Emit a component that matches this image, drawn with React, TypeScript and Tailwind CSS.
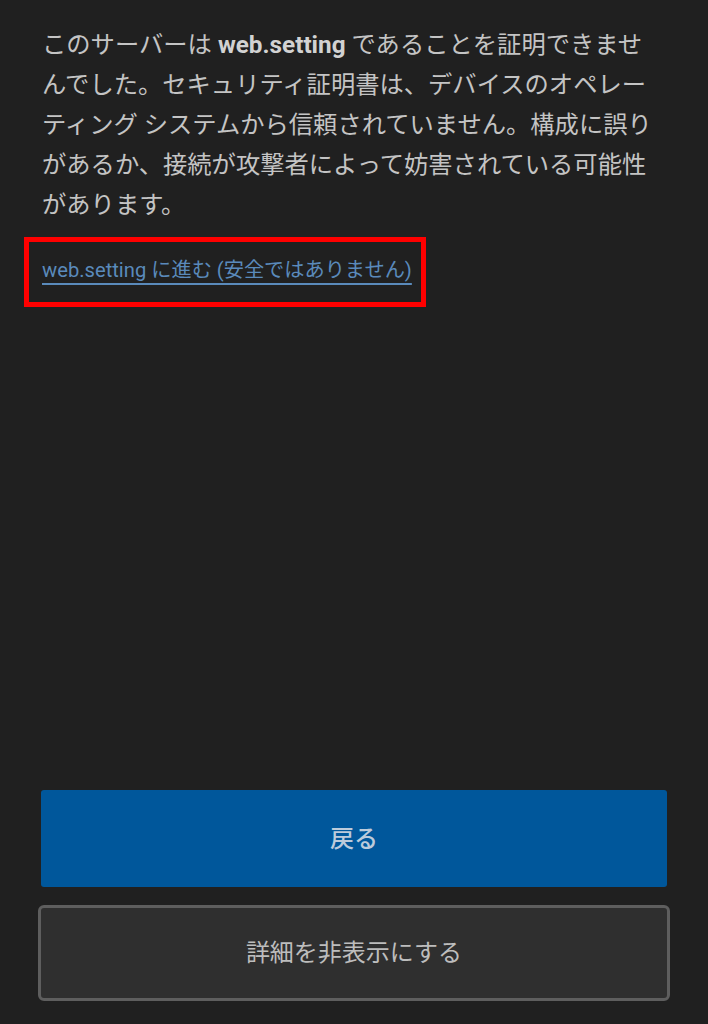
export default function App() {
  const font = "font-['Roboto','Noto_Sans_CJK_JP',sans-serif]";
  return (
    <div className={`${font} flex h-[1024px] w-full flex-col bg-[#202020]`}>
      {/* warning body */}
      <p className="whitespace-nowrap px-[42px] pt-[25px] text-[24.3px] leading-[40px] text-[#c4c4c4]">
        このサーバーは <b className="font-bold text-[#d2d2d2]">web.setting</b> であることを証明できませ
        <br />
        んでした。セキュリティ証明書は、デバイスのオペレー
        <br />
        ティング システムから信頼されていません。構成に誤り
        <br />
        があるか、接続が攻撃者によって妨害されている可能性
        <br />
        があります。
      </p>

      {/* highlighted proceed link */}
      <div className="ml-[24px] mt-[12px] flex h-[70px] w-[402px] items-center border-[5px] border-[#ff0000] pb-[5px] pl-[13px]">
        <a className="whitespace-nowrap text-[20.2px] leading-[28px] text-[#5a8abb] underline decoration-[#5a8abb] decoration-2 underline-offset-[6px]">
          web.setting に進む (安全ではありません)
        </a>
      </div>

      {/* actions */}
      <div className="mt-auto flex flex-col gap-[18px] px-[41px] pb-[23px]">
        <button className="flex h-[97px] items-center justify-center rounded-[3px] bg-[#00579b] text-[24px] font-medium text-[#bccbdb]">
          戻る
        </button>
        <button className="-mx-[3px] flex h-[96px] items-center justify-center rounded-[6px] border-[3px] border-[#5e5e5e] bg-[#2f2f2f] text-[24px] text-[#bdbdbd]">
          詳細を非表示にする
        </button>
      </div>
    </div>
  );
}
